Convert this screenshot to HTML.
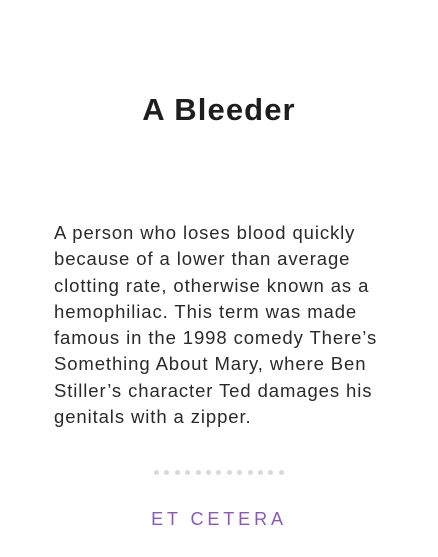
<!DOCTYPE html>
<html><head><meta charset="utf-8"><style>
html,body{margin:0;padding:0;background:#fff;width:438px;height:557px;overflow:hidden}
body{position:relative;font-family:"Liberation Sans",sans-serif;color:#222}
h1{position:absolute;top:90px;left:0;width:438px;text-align:center;margin:0;font-size:31px;font-weight:bold;line-height:40px;color:#1e1e1e;letter-spacing:1.1px}
.p{position:absolute;left:54px;top:220px;font-size:18.5px;line-height:26.3px;white-space:nowrap;color:#2a2a2a;letter-spacing:0.9px}
.dots{position:absolute;top:470px;left:154px;display:flex;gap:5.4px}
.dots span{width:5px;height:5px;border-radius:50%;background:#d9d9d9}
.et{position:absolute;top:508px;left:0;width:438px;text-align:center;font-size:18px;letter-spacing:3.9px;color:#8a58b8;line-height:22px;padding-left:0px}
</style></head><body>
<h1>A Bleeder</h1>
<div class="p">A person who loses blood quickly<br>because of a lower than average<br>clotting rate, otherwise known as a<br>hemophiliac. This term was made<br>famous in the 1998 comedy There’s<br>Something About Mary, where Ben<br>Stiller’s character Ted damages his<br>genitals with a zipper.</div>
<div class="dots"><span></span><span></span><span></span><span></span><span></span><span></span><span></span><span></span><span></span><span></span><span></span><span></span><span></span></div>
<div class="et">ET CETERA</div>
</body></html>
